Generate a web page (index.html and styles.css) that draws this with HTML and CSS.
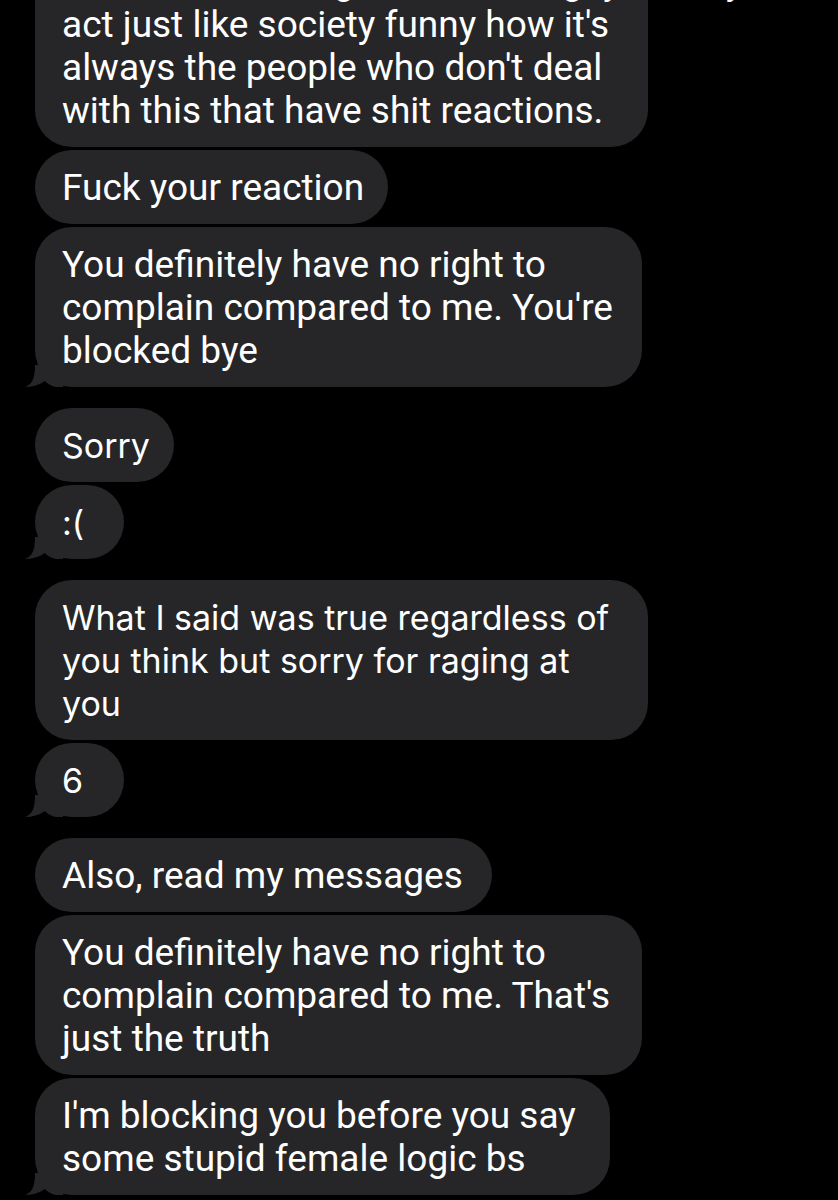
FILE: index.html
```html
<!DOCTYPE html>
<html lang="en">
<head>
<meta charset="utf-8">
<title>Messages</title>
<link rel="stylesheet" href="styles.css">
</head>
<body>
<main class="thread">
  <section class="group">
    <div class="bubble cond w-b1">it's not something I chose and guys always<br>act just like society funny how it's<br>always the people who don't deal<br>with this that have shit reactions.</div>
    <div class="bubble cond w-b2">Fuck your reaction</div>
    <div class="bubble cond w-b3">You definitely have no right to<br>complain compared to me. You're<br>blocked bye<svg class="tail" viewBox="0 0 40 22" width="40" height="22" aria-hidden="true"><path d="M12 0 C12 12 10 19 2 22 C9 22 16 20 22 16 C26 20 30 22 36 22 L40 22 L40 0 Z"/></svg></div>
  </section>
  <section class="group">
    <div class="bubble norm w-b4">Sorry</div>
    <div class="bubble norm w-b5">:(<svg class="tail" viewBox="0 0 40 22" width="40" height="22" aria-hidden="true"><path d="M12 0 C12 12 10 19 2 22 C9 22 16 20 22 16 C26 20 30 22 36 22 L40 22 L40 0 Z"/></svg></div>
  </section>
  <section class="group">
    <div class="bubble norm w-b6">What I said was true regardless of<br>you think but sorry for raging at<br>you</div>
    <div class="bubble norm w-b5">6<svg class="tail" viewBox="0 0 40 22" width="40" height="22" aria-hidden="true"><path d="M12 0 C12 12 10 19 2 22 C9 22 16 20 22 16 C26 20 30 22 36 22 L40 22 L40 0 Z"/></svg></div>
  </section>
  <section class="group">
    <div class="bubble cond w-b8">Also, read my messages</div>
    <div class="bubble cond w-b3">You definitely have no right to<br>complain compared to me. That's<br>just the truth</div>
    <div class="bubble cond w-b10">I'm blocking you before you say<br>some stupid female logic bs<svg class="tail" viewBox="0 0 40 22" width="40" height="22" aria-hidden="true"><path d="M12 0 C12 12 10 19 2 22 C9 22 16 20 22 16 C26 20 30 22 36 22 L40 22 L40 0 Z"/></svg></div>
  </section>
</main>
</body>
</html>
```
FILE: styles.css
```css
* { box-sizing: border-box; }

html, body {
  margin: 0;
  padding: 0;
  background: #000;
}

body {
  width: 838px;
  height: 1200px;
  overflow: hidden;
}

.thread {
  display: flex;
  flex-direction: column;
  gap: 21px;
  padding-left: 35px;
  margin-top: -56px;
}

.group {
  display: flex;
  flex-direction: column;
  align-items: flex-start;
  gap: 3px;
}

.bubble {
  position: relative;
  background: #262628;
  color: #fff;
  border-radius: 37px;
  padding: 15.5px 20px 15.5px 27px;
  line-height: 43px;
  white-space: nowrap;
}

.norm {
  font-family: Inter, "Noto Sans", sans-serif;
  font-size: 34px;
}

.cond {
  font-family: Roboto, "Liberation Sans", sans-serif;
  font-size: 37px;
}

.w-b1 { width: 613px; }
.w-b2 { width: 353px; }
.w-b3 { width: 607px; }
.w-b4 { width: 139px; }
.w-b5 { width: 89px; }
.w-b6 { width: 613px; }
.w-b8 { width: 457px; }
.w-b10 { width: 575px; }

.tail {
  position: absolute;
  left: -12px;
  bottom: 0;
  display: block;
  fill: #262628;
}
```
